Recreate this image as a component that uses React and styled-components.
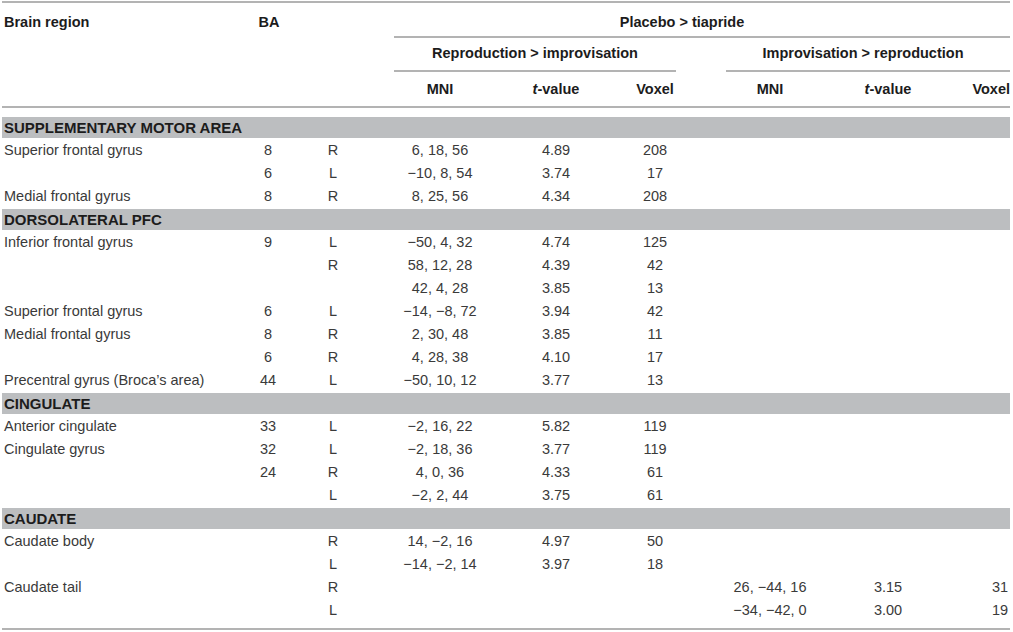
import React from 'react'
import styled, { createGlobalStyle } from 'styled-components'

const Global = createGlobalStyle`
  body {
    margin: 0;
    background: #fff;
    font-family: "Liberation Sans", Arial, sans-serif;
  }
`

const RULE = '2px solid #b3b3b3'

const sections = [
  {
    title: 'SUPPLEMENTARY MOTOR AREA',
    rows: [
      ['Superior frontal gyrus', '8', 'R', '6, 18, 56', '4.89', '208'],
      ['', '6', 'L', '−10, 8, 54', '3.74', '17'],
      ['Medial frontal gyrus', '8', 'R', '8, 25, 56', '4.34', '208'],
    ],
  },
  {
    title: 'DORSOLATERAL PFC',
    rows: [
      ['Inferior frontal gyrus', '9', 'L', '−50, 4, 32', '4.74', '125'],
      ['', '', 'R', '58, 12, 28', '4.39', '42'],
      ['', '', '', '42, 4, 28', '3.85', '13'],
      ['Superior frontal gyrus', '6', 'L', '−14, −8, 72', '3.94', '42'],
      ['Medial frontal gyrus', '8', 'R', '2, 30, 48', '3.85', '11'],
      ['', '6', 'R', '4, 28, 38', '4.10', '17'],
      ['Precentral gyrus (Broca’s area)', '44', 'L', '−50, 10, 12', '3.77', '13'],
    ],
  },
  {
    title: 'CINGULATE',
    rows: [
      ['Anterior cingulate', '33', 'L', '−2, 16, 22', '5.82', '119'],
      ['Cingulate gyrus', '32', 'L', '−2, 18, 36', '3.77', '119'],
      ['', '24', 'R', '4, 0, 36', '4.33', '61'],
      ['', '', 'L', '−2, 2, 44', '3.75', '61'],
    ],
  },
  {
    title: 'CAUDATE',
    rows: [
      ['Caudate body', '', 'R', '14, −2, 16', '4.97', '50'],
      ['', '', 'L', '−14, −2, 14', '3.97', '18'],
      ['Caudate tail', '', 'R', '', '', '', '26, −44, 16', '3.15', '31'],
      ['', '', 'L', '', '', '', '−34, −42, 0', '3.00', '19'],
    ],
  },
]

const widths = [230, 72, 58, 156, 76, 122, 108, 128, 58]

const alignFor = (i) => (i === 0 ? 'left' : i === 8 ? 'right' : 'center')

function App() {
  return (
    <>
      <Global />
      <Table>
        <colgroup>
          {widths.map((w, i) => (
            <col key={i} style={{ width: w }} />
          ))}
        </colgroup>
        <thead>
          <tr>
            <TopHead rowSpan={3} $align="left">Brain region</TopHead>
            <TopHead rowSpan={3}>BA</TopHead>
            <TopHead rowSpan={3} />
            <GroupHead colSpan={6}>
              <GroupLabel $top={11} $bottom={6} $ml={32} $pr={40}>
                Placebo &gt; tiapride
              </GroupLabel>
            </GroupHead>
          </tr>
          <tr>
            <GroupHead colSpan={3}>
              <GroupLabel $top={7} $bottom={9} $ml={32} $mr={40}>
                Reproduction &gt; improvisation
              </GroupLabel>
            </GroupHead>
            <GroupHead colSpan={3}>
              <GroupLabel $top={7} $bottom={9} $ml={10} $pr={10}>
                Improvisation &gt; reproduction
              </GroupLabel>
            </GroupHead>
          </tr>
          <tr>
            <ColHead>MNI</ColHead>
            <ColHead><em>t</em>-value</ColHead>
            <ColHead>Voxel</ColHead>
            <ColHead>MNI</ColHead>
            <ColHead><em>t</em>-value</ColHead>
            <ColHead $align="right">Voxel</ColHead>
          </tr>
        </thead>
        <tbody>
          <Gap $h={8}><td colSpan={9} /></Gap>
          {sections.map((s) => (
            <React.Fragment key={s.title}>
              <tr>
                <SectionCell colSpan={9}>{s.title}</SectionCell>
              </tr>
              {s.rows.map((r, ri) => (
                <tr key={ri}>
                  {Array.from({ length: 9 }, (_, i) => (
                    <Cell key={i} $align={alignFor(i)}>
                      {r[i] || ''}
                    </Cell>
                  ))}
                </tr>
              ))}
            </React.Fragment>
          ))}
          <Gap $h={6}><td colSpan={9} /></Gap>
        </tbody>
      </Table>
    </>
  )
}

const Table = styled.table`
width:1008px;
margin:1px 0 0 2px;
table-layout:fixed;
border-collapse:separate;
border-spacing:0;
border-top:${RULE};
border-bottom:${RULE};
font-size:14.5px;
th{
    font-weight:bold;
    color:#1c1c1c;
    line-height:16px;
    padding:0;
    em{
        font-style:italic;
    }
}
`

const TopHead = styled.th`
vertical-align:top;
text-align:${(p) => p.$align || 'center'};
padding:11px 0 0 2px !important;
border-bottom:${RULE};
`

const GroupHead = styled.th`
vertical-align:top;
`

const GroupLabel = styled.div`
text-align:center;
padding:${(p) => p.$top}px ${(p) => p.$pr || 0}px ${(p) => p.$bottom}px 0;
margin:0 ${(p) => p.$mr || 0}px 0 ${(p) => p.$ml || 0}px;
border-bottom:${RULE};
`

const ColHead = styled.th`
text-align:${(p) => p.$align || 'center'};
padding:9px 0 !important;
border-bottom:${RULE};
`

const Gap = styled.tr`
td{
    height:${(p) => p.$h}px;
    padding:0;
}
`

const SectionCell = styled.td`
height:21px;
padding:0 0 0 2px;
background:#bcbec0;
background-clip:padding-box;
border-top:1px solid #fff;
border-bottom:1px solid #fff;
font-size:15px;
font-weight:bold;
color:#1c1c1c;
line-height:21px;
`

const Cell = styled.td`
height:23px;
padding:0 ${(p) => (p.$align === 'right' ? '2px' : '0')} 0 ${(p) => (p.$align === 'left' ? '2px' : '0')};
line-height:23px;
text-align:${(p) => p.$align};
color:#3a3a3a;
white-space:nowrap;
`

export default App
